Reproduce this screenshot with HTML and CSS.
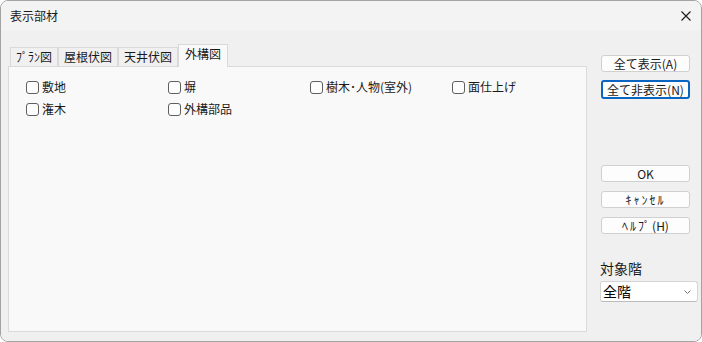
FILE: index.html
```html
<!DOCTYPE html>
<html lang="ja">
<head>
<meta charset="utf-8">
<title>表示部材</title>
<link rel="stylesheet" href="styles.css">
</head>
<body>
<div class="dialog">
  <div class="titlebar">
    <span class="title">表示部材</span>
    <svg class="close" width="10" height="10" viewBox="0 0 10 10"><path d="M0.5 0.5L9.5 9.5M9.5 0.5L0.5 9.5" stroke="#1a1a1a" stroke-width="1.1" fill="none"/></svg>
  </div>
  <div class="content">
    <div class="main">
      <div class="tabs">
        <div class="tab">ﾌﾟﾗﾝ図</div>
        <div class="tab">屋根伏図</div>
        <div class="tab">天井伏図</div>
        <div class="tab active">外構図</div>
      </div>
      <div class="panel">
        <div class="grid">
          <label class="check"><span class="box"></span><span>敷地</span></label>
          <label class="check"><span class="box"></span><span>塀</span></label>
          <label class="check"><span class="box"></span><span>樹木･人物(室外)</span></label>
          <label class="check"><span class="box"></span><span>面仕上げ</span></label>
          <label class="check"><span class="box"></span><span>潅木</span></label>
          <label class="check"><span class="box"></span><span>外構部品</span></label>
        </div>
      </div>
    </div>
    <div class="side">
      <div class="btn">全て表示(A)</div>
      <div class="btn focused">全て非表示(N)</div>
      <div class="btn ok">OK</div>
      <div class="btn"><span class="kana">ｷｬﾝｾﾙ</span></div>
      <div class="btn"><span class="kana">ﾍﾙﾌﾟ</span>(H)</div>
      <div class="label">対象階</div>
      <div class="select"><span>全階</span>
        <svg width="7" height="4" viewBox="0 0 7 4"><path d="M0.5 0.5L3.5 3.5L6.5 0.5" stroke="#707070" stroke-width="1" fill="none"/></svg>
      </div>
    </div>
  </div>
</div>
</body>
</html>
```

FILE: styles.css
```css
html, body {
  margin: 0;
  padding: 0;
  background: #ffffff;
}
body {
  font-family: "Noto Sans CJK JP", "Noto Sans", sans-serif;
  font-size: 12px;
  color: #000;
}
.dialog {
  width: 702px;
  height: 342px;
  box-sizing: border-box;
  border: 1px solid #a3a3a3;
  border-radius: 8px;
  overflow: hidden;
  background: #f0f0f0;
  display: flex;
  flex-direction: column;
}
.titlebar {
  height: 30px;
  flex: none;
  background: #f3f3f3;
  display: flex;
  align-items: center;
  justify-content: space-between;
  padding: 0 10px 0 9px;
}
.title {
  font-size: 12px;
  line-height: 30px;
  color: #1a1a1a;
}
.close {
  display: block;
}
.content {
  flex: 1;
  display: flex;
  background: #f0f0f0;
}
.main {
  padding: 13px 0 0 7px;
  display: flex;
  flex-direction: column;
}
.tabs {
  display: flex;
  align-items: flex-end;
  padding-left: 2px;
  height: 22px;
}
.tab {
  height: 19px;
  box-sizing: border-box;
  border: 1px solid #d9d9d9;
  border-bottom: none;
  padding: 0 5px;
  line-height: 18px;
  background: #f0f0f0;
  color: #1a1a1a;
  white-space: nowrap;
}
.tab.active {
  position: relative;
  height: 23px;
  margin-bottom: -1px;
  background: #f9f9f9;
  padding: 0 6px;
  line-height: 18px;
}
.kana {
  letter-spacing: 2px;
}
.panel {
  width: 579px;
  height: 266px;
  box-sizing: border-box;
  border: 1px solid #dadada;
  background: #f9f9f9;
}
.grid {
  display: grid;
  grid-template-columns: repeat(4, 142px);
  grid-auto-rows: 22px;
  padding: 9px 0 0 17px;
}
.check {
  display: flex;
  align-items: center;
  gap: 3px;
  line-height: 16px;
  color: #1a1a1a;
}
.box {
  width: 13px;
  height: 13px;
  box-sizing: border-box;
  border: 1px solid #5f5f5f;
  border-radius: 3px;
  background: #fdfdfd;
  flex: none;
}
.side {
  margin-left: 13px;
  width: 98px;
  padding-top: 24px;
  display: flex;
  flex-direction: column;
  align-items: flex-start;
}
.btn {
  width: 89px;
  height: 17px;
  box-sizing: border-box;
  margin-left: 1px;
  border: 1px solid #d0d0d0;
  border-radius: 3px;
  background: #fdfdfd;
  text-align: center;
  line-height: 15px;
  font-size: 12px;
  color: #1a1a1a;
  margin-bottom: 9px;
  white-space: nowrap;
}
.btn.focused {
  height: 19px;
  border: 2px solid #0a64c2;
  line-height: 15px;
  margin-top: -1px;
}
.btn.ok {
  margin-top: 57px;
}
.label {
  margin-top: 15px;
  font-size: 14px;
  line-height: 20px;
  color: #1a1a1a;
}
.select {
  margin-top: 3px;
  width: 98px;
  height: 21px;
  box-sizing: border-box;
  border: 1px solid #d4d4d4;
  border-bottom-color: #bcbcbc;
  border-radius: 3px;
  background: #ffffff;
  display: flex;
  align-items: center;
  justify-content: space-between;
  padding: 0 6px 0 2px;
  font-size: 14px;
  line-height: 19px;
  color: #000;
}
.select svg {
  display: block;
}
```
